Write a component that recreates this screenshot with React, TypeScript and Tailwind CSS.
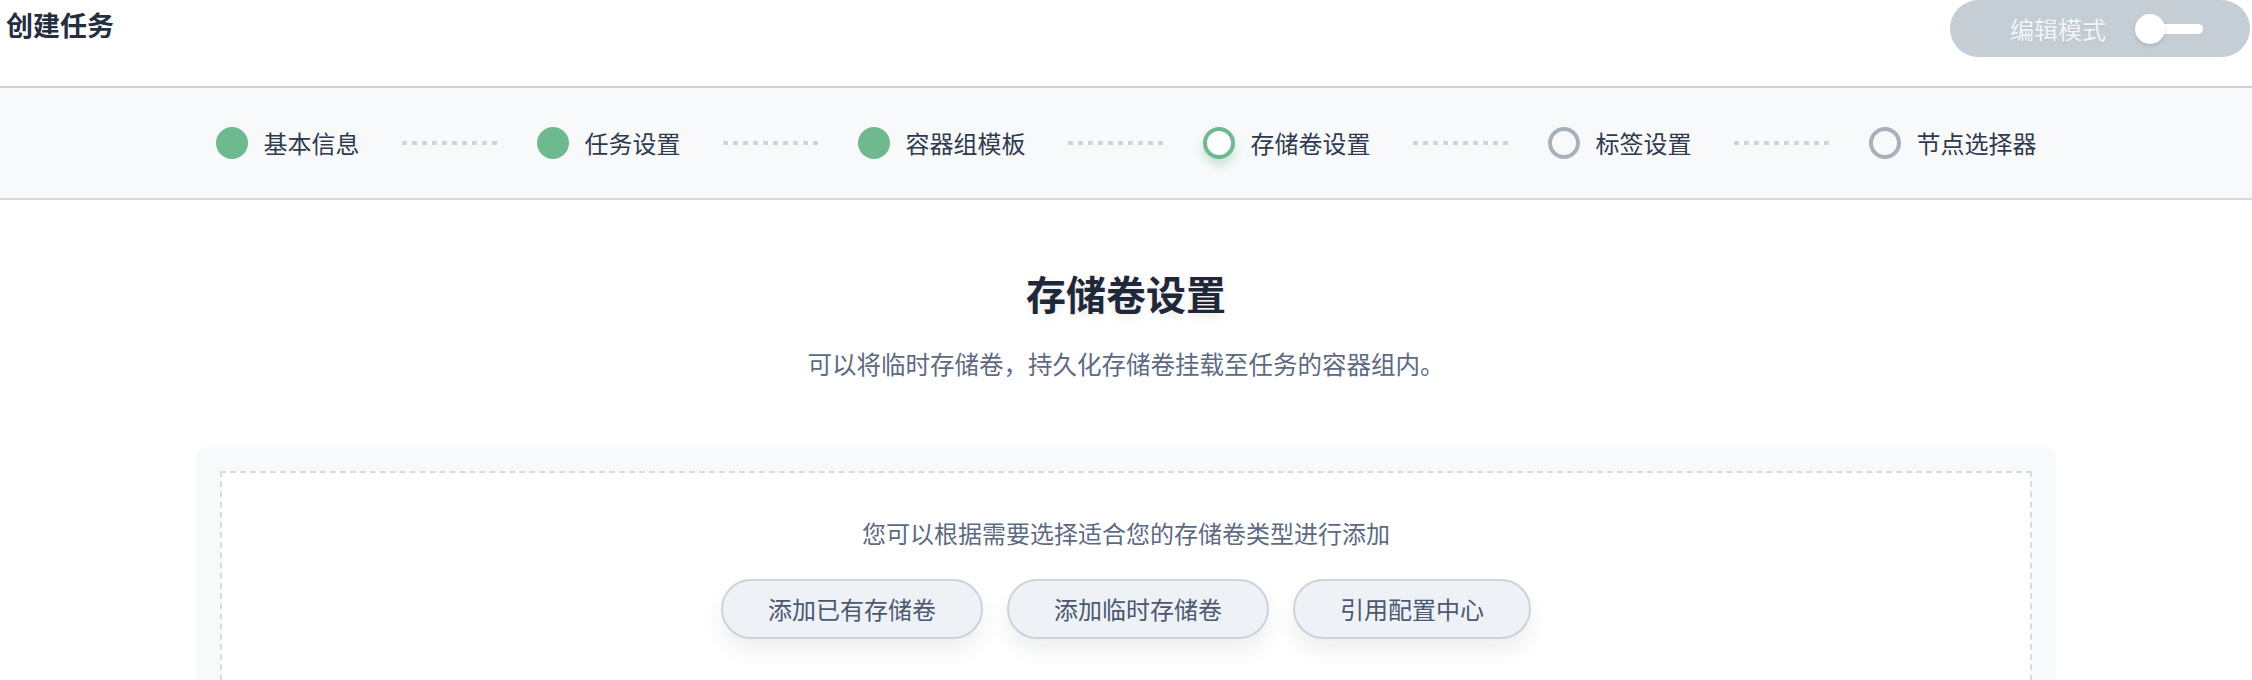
import React from "react";

type StepState = "done" | "active" | "todo";

const steps: { label: string; state: StepState }[] = [
  { label: "基本信息", state: "done" },
  { label: "任务设置", state: "done" },
  { label: "容器组模板", state: "done" },
  { label: "存储卷设置", state: "active" },
  { label: "标签设置", state: "todo" },
  { label: "节点选择器", state: "todo" },
];

function Dots() {
  return (
    <div className="flex items-center gap-[5px] ml-[42px] mr-[40px]">
      {Array.from({ length: 10 }).map((_, i) => (
        <span key={i} className="block w-[5px] h-[4px] bg-[#cfd4dc]" />
      ))}
    </div>
  );
}

function StepCircle({ state }: { state: StepState }) {
  if (state === "done") {
    return <span className="block w-[32px] h-[32px] rounded-full bg-[#6fb98f]" />;
  }
  if (state === "active") {
    return (
      <span className="block w-[32px] h-[32px] rounded-full border-[4px] border-[#6fb98f] bg-white shadow-[0_6px_10px_rgba(111,185,143,0.35)]" />
    );
  }
  return <span className="block w-[32px] h-[32px] rounded-full border-[4px] border-[#a9afbb] bg-[#f8f9fb]" />;
}

export default function App() {
  return (
    <div
      className="w-[2252px] min-h-[680px] bg-white text-[#2f3a4d]"
      style={{ fontFamily: '"Noto Sans CJK SC", "Noto Sans", sans-serif' }}
    >
      {/* Header */}
      <div className="h-[88px] flex justify-between items-start border-b-2 border-[#c8d0d8]">
        <div className="pl-[6px] pt-[7px] text-[27px] leading-[36px] font-semibold text-[#252e3f]">创建任务</div>
        <div className="mr-[2px] h-[57px] w-[300px] rounded-full bg-[#c5cdd5] flex items-center pl-[60px]">
          <span className="text-[24px] leading-[32px] text-[#f3f5f7] [text-shadow:0_1px_2px_rgba(0,0,0,0.06)]">编辑模式</span>
          <div className="relative ml-[29px] w-[68px] h-[30px] flex items-center">
            <span className="absolute left-[10px] right-0 h-[10px] rounded-full bg-white" />
            <span className="absolute left-0 w-[30px] h-[30px] rounded-full bg-white shadow-[0_2px_4px_rgba(0,0,0,0.12)]" />
          </div>
        </div>
      </div>

      {/* Stepper */}
      <div className="bg-[#f8f9fb] border-b-2 border-[#d3d9e0] pt-[39px] pb-[39px] flex justify-center items-center">
        {steps.map((s, i) => (
          <React.Fragment key={s.label}>
            <div className="flex items-center">
              <StepCircle state={s.state} />
              <span className="ml-[16px] text-[24px] leading-[32px] text-[#2f3a4d]">{s.label}</span>
            </div>
            {i < steps.length - 1 && <Dots />}
          </React.Fragment>
        ))}
      </div>

      {/* Content */}
      <div className="flex flex-col items-center">
        <h1 className="mt-[69px] text-[40px] leading-[48px] font-bold text-[#1f2838] [text-shadow:0_4px_8px_rgba(0,0,0,0.08)]">
          存储卷设置
        </h1>
        <p className="mt-[30px] text-[24.5px] leading-[34px] text-[#5d6a82]">
          可以将临时存储卷，持久化存储卷挂载至任务的容器组内。
        </p>

        <div className="mt-[66px] w-[1860px] rounded-[10px] bg-[#f8f9fb] px-[24px] pt-[24px]">
          <div className="h-[240px] border-2 border-dashed border-[#d6dbe1] border-b-0 bg-white flex flex-col items-center pt-[43px]">
            <p className="text-[24px] leading-[34px] text-[#5d6a82]">您可以根据需要选择适合您的存储卷类型进行添加</p>
            <div className="mt-[29px] flex gap-[24px]">
              {["添加已有存储卷", "添加临时存储卷", "引用配置中心"].map((t) => (
                <button
                  key={t}
                  className="h-[60px] px-[45px] rounded-full border-2 border-[#cdd3dc] bg-[#eef1f6] text-[24px] leading-[32px] text-[#4b5870] shadow-[0_12px_20px_rgba(40,50,70,0.08)]"
                >
                  {t}
                </button>
              ))}
            </div>
          </div>
        </div>
      </div>
    </div>
  );
}
